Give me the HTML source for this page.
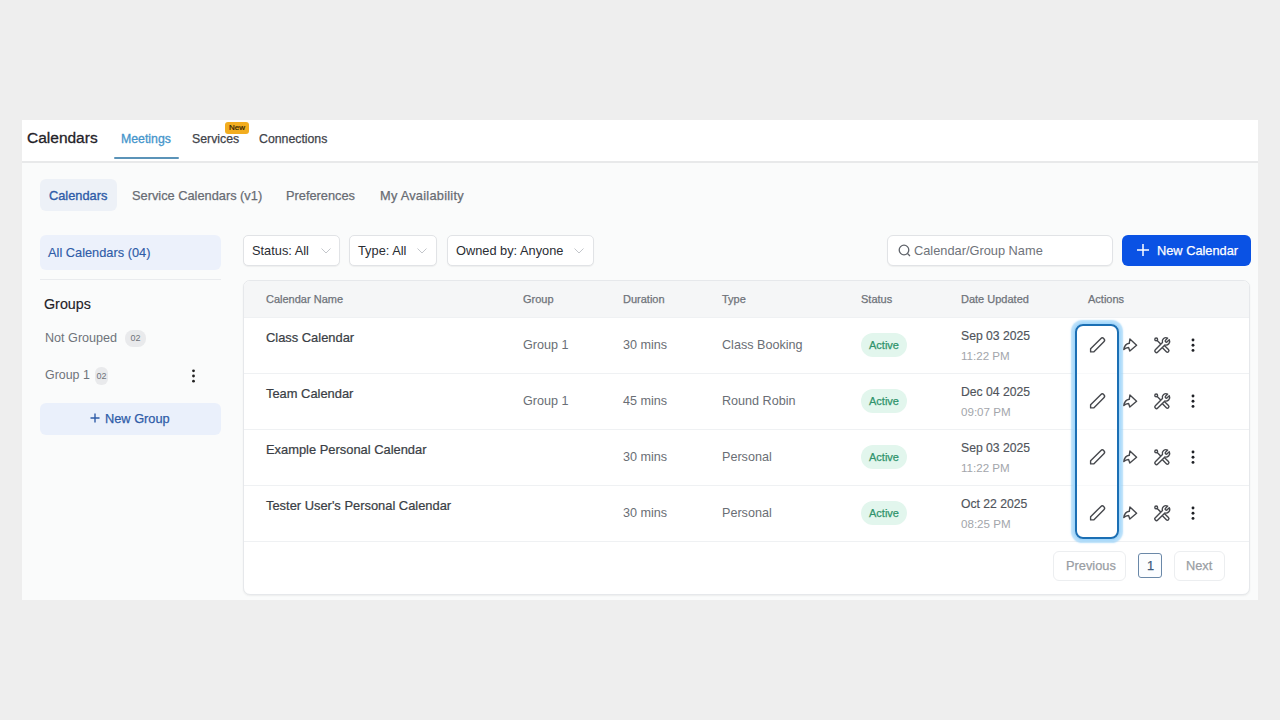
<!DOCTYPE html>
<html><head><meta charset="utf-8">
<style>
*{box-sizing:border-box;margin:0;padding:0}
html,body{width:1280px;height:720px;overflow:hidden;background:#eeeeee;font-family:"Liberation Sans",sans-serif;color:#1f2937}
.a{position:absolute;white-space:nowrap}
.m{-webkit-text-stroke:0.25px currentColor}
#card{position:absolute;left:22px;top:120px;width:1236px;height:480px;background:#fafbfb}
#top{position:absolute;left:22px;top:120px;width:1236px;height:41px;background:#fff;box-shadow:0 2px 0 #e8e9ea}
.tab{position:absolute;top:132px;font-size:12.3px;color:#3f434a}
.sub{position:absolute;top:188px;font-size:12.8px;color:#686c73}
.pill{position:absolute;border-radius:6px}
.sel{position:absolute;background:#fff;border:1px solid #e1e3e6;border-radius:5px;height:31px;top:235px;box-shadow:0 1px 1px rgba(0,0,0,0.05)}
.sel span{position:absolute;left:8px;top:7px;font-size:12.8px;color:#2a2d33}
.chev{position:absolute;top:12px}
.th{position:absolute;top:293px;font-size:11px;color:#6f737a}
.row{position:absolute;left:244px;width:1005px;height:1px;background:#eff1f3}
.nm{position:absolute;font-size:12.9px;color:#3a3e45;-webkit-text-stroke:0.22px #3a3e45}
.cell{position:absolute;font-size:12.6px;color:#6a6e75}
.act{position:absolute;width:46px;height:24px;border-radius:12px;background:#e2f6ed;font-size:11px;color:#2f946c;text-align:center;line-height:24px;-webkit-text-stroke:0.25px #2f946c}
.dt{position:absolute;font-size:12.2px;color:#50545b;-webkit-text-stroke:0.15px #50545b}
.tm{position:absolute;font-size:11.6px;color:#a3a6ab}
.ic{position:absolute}
</style></head><body>
<div id="card"></div>
<div id="top"></div>
<div class="a m" style="left:27px;top:129px;font-size:15.5px;color:#1f2228;-webkit-text-stroke:0.3px #1f2228">Calendars</div>
<div class="tab m" style="left:121px;color:#4595cb;-webkit-text-stroke:0.3px #4595cb">Meetings</div>
<div class="a" style="left:114px;top:157px;width:65px;height:2px;background:#5b93b8;border-radius:1px"></div>
<div class="tab m" style="left:192px">Services</div>
<div class="a" style="left:225px;top:122px;width:24px;height:12px;background:#f2ad1f;border-radius:3px;font-size:8px;line-height:12px;text-align:center;color:#2e2104;-webkit-text-stroke:0.2px #2e2104">New</div>
<div class="tab m" style="left:259px">Connections</div>

<div class="pill" style="left:40px;top:179px;width:77px;height:32px;background:#edf1f7"></div>
<div class="sub m" style="left:49px;color:#2f5ca8;-webkit-text-stroke:0.35px #2f5ca8">Calendars</div>
<div class="sub m" style="left:132px">Service Calendars (v1)</div>
<div class="sub m" style="left:286px">Preferences</div>
<div class="sub m" style="left:380px;letter-spacing:0.25px">My Availability</div>

<div class="pill" style="left:40px;top:235px;width:181px;height:35px;background:#ecf1fb"></div>
<div class="a" style="left:48px;top:245px;font-size:12.8px;color:#2f5ca8;-webkit-text-stroke:0.15px #2f5ca8">All Calendars (04)</div>
<div class="a" style="left:40px;top:279px;width:181px;height:1px;background:#e9ebee"></div>
<div class="a" style="left:44px;top:296px;font-size:14.3px;color:#1f2228;-webkit-text-stroke:0.15px #1f2228">Groups</div>
<div class="a" style="left:45px;top:331px;font-size:12.6px;color:#6f737a">Not Grouped</div>
<div class="a" style="left:125px;top:330px;width:21px;height:17px;border-radius:8px;background:#e9eaec;font-size:9px;line-height:17px;text-align:center;color:#6f737a">02</div>
<div class="a" style="left:45px;top:368px;font-size:12.4px;color:#6f737a">Group 1</div>
<div class="a" style="left:95px;top:367px;width:13px;height:18px;border-radius:6px;background:#e9eaec;font-size:9px;line-height:18px;text-align:center;color:#6f737a">02</div>
<svg class="ic" style="left:190px;top:368px" width="7" height="16"><circle cx="3.5" cy="2.8" r="1.4" fill="#222"/><circle cx="3.5" cy="8" r="1.4" fill="#222"/><circle cx="3.5" cy="13.2" r="1.4" fill="#222"/></svg>
<div class="pill" style="left:40px;top:403px;width:181px;height:32px;background:#eaf0fb"></div>
<svg class="ic" style="left:90px;top:413px" width="10" height="10"><path d="M5 0.5V9.5M0.5 5H9.5" stroke="#2f5ca8" stroke-width="1.4"/></svg>
<div class="a m" style="left:105px;top:411px;font-size:12.8px;color:#2f5ca8">New Group</div>

<div class="sel" style="left:243px;width:97px"><span>Status: All</span><svg class="chev" style="left:77px" width="10" height="6"><path d="M0.5 0.5L5 5L9.5 0.5" fill="none" stroke="#c3c6cb" stroke-width="1"/></svg></div>
<div class="sel" style="left:349px;width:88px"><span>Type: All</span><svg class="chev" style="left:67px" width="10" height="6"><path d="M0.5 0.5L5 5L9.5 0.5" fill="none" stroke="#c3c6cb" stroke-width="1"/></svg></div>
<div class="sel" style="left:447px;width:147px"><span>Owned by: Anyone</span><svg class="chev" style="left:126px" width="10" height="6"><path d="M0.5 0.5L5 5L9.5 0.5" fill="none" stroke="#c3c6cb" stroke-width="1"/></svg></div>
<div class="sel" style="left:887px;width:226px;border-radius:6px"><svg class="ic" style="left:10px;top:8px" width="13" height="13"><circle cx="6" cy="6" r="4.8" fill="none" stroke="#5f636a" stroke-width="1.3"/><path d="M9.5 9.5L12 12" stroke="#5f636a" stroke-width="1.3"/></svg><span style="left:26px;color:#6f737a">Calendar/Group Name</span></div>
<div class="a" style="left:1122px;top:235px;width:129px;height:31px;background:#0a52e4;border-radius:6px"></div>
<svg class="ic" style="left:1137px;top:244px" width="12" height="12"><path d="M6 0V12M0 6H12" stroke="#fff" stroke-width="1.5"/></svg>
<div class="a m" style="left:1157px;top:243px;font-size:12.8px;color:#fff">New Calendar</div>

<div class="a" style="left:243px;top:280px;width:1007px;height:315px;background:#fff;border:1px solid #e6e8eb;border-radius:7px;overflow:hidden;box-shadow:0 1px 2px rgba(0,0,0,0.06)">
  <div style="position:absolute;left:0;top:0;width:100%;height:37px;background:#f5f6f7"></div>
</div>
<div class="th m" style="left:266px">Calendar Name</div>
<div class="th m" style="left:523px">Group</div>
<div class="th m" style="left:623px">Duration</div>
<div class="th m" style="left:722px">Type</div>
<div class="th m" style="left:861px">Status</div>
<div class="th m" style="left:961px">Date Updated</div>
<div class="th m" style="left:1088px">Actions</div>

<div class="row" style="top:317px"></div>
<div class="row" style="top:373px"></div>
<div class="row" style="top:429px"></div>
<div class="row" style="top:485px"></div>
<div class="row" style="top:541px"></div>

<div class="a" style="left:1075px;top:324px;width:44px;height:215px;border:2px solid #1b6fb4;border-radius:8px;background:rgba(255,255,255,0.55);box-shadow:0 0 0 1.5px #a3d7fb,0 0 1.5px 3.5px rgba(150,208,248,0.7)"></div>
<!--ROWS-->
<div class="nm" style="left:266px;top:330px">Class Calendar</div>
<div class="cell" style="left:523px;top:338px">Group 1</div>
<div class="cell" style="left:623px;top:338px">30 mins</div>
<div class="cell" style="left:722px;top:338px">Class Booking</div>
<div class="act" style="left:861px;top:333px">Active</div>
<div class="dt" style="left:961px;top:329px">Sep 03 2025</div>
<div class="tm" style="left:961px;top:349px">11:22 PM</div>
<svg class="ic" style="left:1086px;top:334px" width="24" height="22" viewBox="0 0 24 22"><path d="M4.6 17.9 H7.71 L17.86 7.76 A2.2 2.2 0 0 0 14.74 4.64 L4.6 14.79 Z" fill="none" stroke="#46484d" stroke-width="1.4" stroke-linejoin="round"/></svg>
<svg class="ic" style="left:1118px;top:334px" width="24" height="22" viewBox="0 0 24 22"><path d="M11.9 5.0 L18.6 11.2 L11.8 17.0 L10.6 13.5 C8.5 13.6 7 14.3 5.8 15.6 C6.3 12 8 9.8 11.3 9.3 Z" fill="none" stroke="#46484d" stroke-width="1.4" stroke-linejoin="round"/></svg>
<svg class="ic" style="left:1150px;top:334px" width="24" height="22" viewBox="0 0 24 22"><g fill="none" stroke="#46484d" stroke-width="1.4" stroke-linejoin="round" stroke-linecap="round"><circle cx="6.2" cy="5.4" r="1.4"/><path d="M7.2 6.4 L18 17.2"/><path d="M13.3 12.5 L17.4 16.6" stroke-width="4.4"/><path d="M13.3 12.5 L17.4 16.6" stroke="#fff" stroke-width="1.6"/><path fill="#fff" d="M5.32 15.67 L12.47 8.52 A3.7 3.7 0 0 1 17.67 4.10 L15.54 6.23 A1.15 1.15 0 0 0 17.17 7.86 L19.30 5.73 A3.7 3.7 0 0 1 14.88 10.93 L7.73 18.08 A1.7 1.7 0 0 1 5.32 15.67 Z"/></g></svg>
<svg class="ic" style="left:1189px;top:337px" width="8" height="16"><circle cx="4" cy="3" r="1.45" fill="#1f2126"/><circle cx="4" cy="8.2" r="1.45" fill="#1f2126"/><circle cx="4" cy="13.4" r="1.45" fill="#1f2126"/></svg>
<div class="nm" style="left:266px;top:386px">Team Calendar</div>
<div class="cell" style="left:523px;top:394px">Group 1</div>
<div class="cell" style="left:623px;top:394px">45 mins</div>
<div class="cell" style="left:722px;top:394px">Round Robin</div>
<div class="act" style="left:861px;top:389px">Active</div>
<div class="dt" style="left:961px;top:385px">Dec 04 2025</div>
<div class="tm" style="left:961px;top:405px">09:07 PM</div>
<svg class="ic" style="left:1086px;top:390px" width="24" height="22" viewBox="0 0 24 22"><path d="M4.6 17.9 H7.71 L17.86 7.76 A2.2 2.2 0 0 0 14.74 4.64 L4.6 14.79 Z" fill="none" stroke="#46484d" stroke-width="1.4" stroke-linejoin="round"/></svg>
<svg class="ic" style="left:1118px;top:390px" width="24" height="22" viewBox="0 0 24 22"><path d="M11.9 5.0 L18.6 11.2 L11.8 17.0 L10.6 13.5 C8.5 13.6 7 14.3 5.8 15.6 C6.3 12 8 9.8 11.3 9.3 Z" fill="none" stroke="#46484d" stroke-width="1.4" stroke-linejoin="round"/></svg>
<svg class="ic" style="left:1150px;top:390px" width="24" height="22" viewBox="0 0 24 22"><g fill="none" stroke="#46484d" stroke-width="1.4" stroke-linejoin="round" stroke-linecap="round"><circle cx="6.2" cy="5.4" r="1.4"/><path d="M7.2 6.4 L18 17.2"/><path d="M13.3 12.5 L17.4 16.6" stroke-width="4.4"/><path d="M13.3 12.5 L17.4 16.6" stroke="#fff" stroke-width="1.6"/><path fill="#fff" d="M5.32 15.67 L12.47 8.52 A3.7 3.7 0 0 1 17.67 4.10 L15.54 6.23 A1.15 1.15 0 0 0 17.17 7.86 L19.30 5.73 A3.7 3.7 0 0 1 14.88 10.93 L7.73 18.08 A1.7 1.7 0 0 1 5.32 15.67 Z"/></g></svg>
<svg class="ic" style="left:1189px;top:393px" width="8" height="16"><circle cx="4" cy="3" r="1.45" fill="#1f2126"/><circle cx="4" cy="8.2" r="1.45" fill="#1f2126"/><circle cx="4" cy="13.4" r="1.45" fill="#1f2126"/></svg>
<div class="nm" style="left:266px;top:442px">Example Personal Calendar</div>
<div class="cell" style="left:623px;top:450px">30 mins</div>
<div class="cell" style="left:722px;top:450px">Personal</div>
<div class="act" style="left:861px;top:445px">Active</div>
<div class="dt" style="left:961px;top:441px">Sep 03 2025</div>
<div class="tm" style="left:961px;top:461px">11:22 PM</div>
<svg class="ic" style="left:1086px;top:446px" width="24" height="22" viewBox="0 0 24 22"><path d="M4.6 17.9 H7.71 L17.86 7.76 A2.2 2.2 0 0 0 14.74 4.64 L4.6 14.79 Z" fill="none" stroke="#46484d" stroke-width="1.4" stroke-linejoin="round"/></svg>
<svg class="ic" style="left:1118px;top:446px" width="24" height="22" viewBox="0 0 24 22"><path d="M11.9 5.0 L18.6 11.2 L11.8 17.0 L10.6 13.5 C8.5 13.6 7 14.3 5.8 15.6 C6.3 12 8 9.8 11.3 9.3 Z" fill="none" stroke="#46484d" stroke-width="1.4" stroke-linejoin="round"/></svg>
<svg class="ic" style="left:1150px;top:446px" width="24" height="22" viewBox="0 0 24 22"><g fill="none" stroke="#46484d" stroke-width="1.4" stroke-linejoin="round" stroke-linecap="round"><circle cx="6.2" cy="5.4" r="1.4"/><path d="M7.2 6.4 L18 17.2"/><path d="M13.3 12.5 L17.4 16.6" stroke-width="4.4"/><path d="M13.3 12.5 L17.4 16.6" stroke="#fff" stroke-width="1.6"/><path fill="#fff" d="M5.32 15.67 L12.47 8.52 A3.7 3.7 0 0 1 17.67 4.10 L15.54 6.23 A1.15 1.15 0 0 0 17.17 7.86 L19.30 5.73 A3.7 3.7 0 0 1 14.88 10.93 L7.73 18.08 A1.7 1.7 0 0 1 5.32 15.67 Z"/></g></svg>
<svg class="ic" style="left:1189px;top:449px" width="8" height="16"><circle cx="4" cy="3" r="1.45" fill="#1f2126"/><circle cx="4" cy="8.2" r="1.45" fill="#1f2126"/><circle cx="4" cy="13.4" r="1.45" fill="#1f2126"/></svg>
<div class="nm" style="left:266px;top:498px">Tester User's Personal Calendar</div>
<div class="cell" style="left:623px;top:506px">30 mins</div>
<div class="cell" style="left:722px;top:506px">Personal</div>
<div class="act" style="left:861px;top:501px">Active</div>
<div class="dt" style="left:961px;top:497px">Oct 22 2025</div>
<div class="tm" style="left:961px;top:517px">08:25 PM</div>
<svg class="ic" style="left:1086px;top:502px" width="24" height="22" viewBox="0 0 24 22"><path d="M4.6 17.9 H7.71 L17.86 7.76 A2.2 2.2 0 0 0 14.74 4.64 L4.6 14.79 Z" fill="none" stroke="#46484d" stroke-width="1.4" stroke-linejoin="round"/></svg>
<svg class="ic" style="left:1118px;top:502px" width="24" height="22" viewBox="0 0 24 22"><path d="M11.9 5.0 L18.6 11.2 L11.8 17.0 L10.6 13.5 C8.5 13.6 7 14.3 5.8 15.6 C6.3 12 8 9.8 11.3 9.3 Z" fill="none" stroke="#46484d" stroke-width="1.4" stroke-linejoin="round"/></svg>
<svg class="ic" style="left:1150px;top:502px" width="24" height="22" viewBox="0 0 24 22"><g fill="none" stroke="#46484d" stroke-width="1.4" stroke-linejoin="round" stroke-linecap="round"><circle cx="6.2" cy="5.4" r="1.4"/><path d="M7.2 6.4 L18 17.2"/><path d="M13.3 12.5 L17.4 16.6" stroke-width="4.4"/><path d="M13.3 12.5 L17.4 16.6" stroke="#fff" stroke-width="1.6"/><path fill="#fff" d="M5.32 15.67 L12.47 8.52 A3.7 3.7 0 0 1 17.67 4.10 L15.54 6.23 A1.15 1.15 0 0 0 17.17 7.86 L19.30 5.73 A3.7 3.7 0 0 1 14.88 10.93 L7.73 18.08 A1.7 1.7 0 0 1 5.32 15.67 Z"/></g></svg>
<svg class="ic" style="left:1189px;top:505px" width="8" height="16"><circle cx="4" cy="3" r="1.45" fill="#1f2126"/><circle cx="4" cy="8.2" r="1.45" fill="#1f2126"/><circle cx="4" cy="13.4" r="1.45" fill="#1f2126"/></svg>

<div class="a" style="left:1053px;top:551px;width:73px;height:30px;border:1px solid #eceef0;border-radius:6px;background:#fff"></div>
<div class="a m" style="left:1066px;top:558px;font-size:12.8px;color:#9a9ea4">Previous</div>
<div class="a" style="left:1138px;top:553px;width:24px;height:25px;border:1.5px solid #6a88a8;border-radius:3px;background:#fbfdff"></div>
<div class="a m" style="left:1147px;top:558px;font-size:12.8px;color:#3c5a7c">1</div>
<div class="a" style="left:1174px;top:551px;width:51px;height:30px;border:1px solid #eceef0;border-radius:6px;background:#fff"></div>
<div class="a m" style="left:1186px;top:558px;font-size:12.8px;color:#9a9ea4">Next</div>
</body></html>
